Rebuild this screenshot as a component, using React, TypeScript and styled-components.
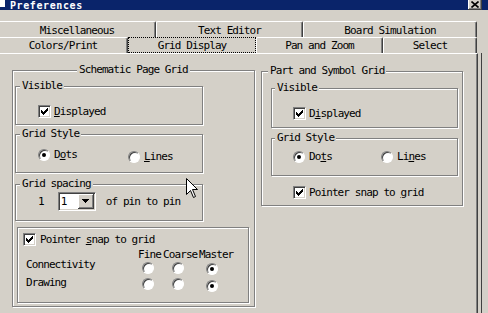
import styled, { createGlobalStyle, css } from "styled-components";

const face = "#d4d0c8";
const shadow = "#808080";
const dark = "#404040";

const GlobalStyle = createGlobalStyle`
  html, body {
    margin: 0;
    padding: 0;
    background: ${face};
  }
  body {
    font-family: "DejaVu Sans Mono", "Liberation Mono", monospace;
    font-size: 11px;
    letter-spacing: -0.9px;
    color: #000;
  }
`;

const tabsBack = [
  { label: "Miscellaneous", width: 158 },
  { label: "Text Editor", width: 147 },
  { label: "Board Simulation", width: 174 },
];

const tabsFront = [
  { label: "Colors/Print", width: 130 },
  { label: "Grid Display", width: 128, active: true },
  { label: "Pan and Zoom", width: 127 },
  { label: "Select", width: 94 },
];

const Check = () => (
  <CheckBox>
    <svg width="7" height="7" viewBox="0 0 7 7" shapeRendering="crispEdges">
      {[2, 3, 4, 3, 2, 1, 0].map((y, x) => (
        <rect key={x} x={x} y={y} width="1" height="3" fill="#000" />
      ))}
    </svg>
  </CheckBox>
);

const App = () => {
  return (
    <>
      <GlobalStyle />
      <Window>
        <TitleBar>
          <TitleIcon />
          <TitleText>Preferences</TitleText>
          <CloseButton>
            <svg width="8" height="7" viewBox="0 0 8 7">
              <path d="M0.5 0.5 L7.5 6.5 M7.5 0.5 L0.5 6.5" stroke="#000" strokeWidth="1.6" />
            </svg>
          </CloseButton>
        </TitleBar>

        <TabRow $mt={11}>
          {tabsBack.map((t) => (
            <Tab key={t.label} $w={t.width} $pt={3}>
              {t.label}
            </Tab>
          ))}
        </TabRow>
        <TabRow $mt={0}>
          {tabsFront.map((t) => (
            <Tab key={t.label} $w={t.width} $pt={2} $active={t.active}>
              {t.label}
            </Tab>
          ))}
        </TabRow>

        <PanelFrame>
          <Panel>
            {/* Schematic Page Grid */}
            <Group $w={243} $h={237} $mt={16}>
              <GroupTitle $ml={64}>Schematic Page Grid</GroupTitle>

              <Group $w={188} $h={39} $mt={10} $ml={2}>
                <GroupTitle $ml={4}>Visible</GroupTitle>
                <CheckRow $mt={13} $ml={22}>
                  <Check />
                  <span>
                    <Key>D</Key>isplayed
                  </span>
                </CheckRow>
              </Group>

              <Group $w={188} $h={39} $mt={9} $ml={2}>
                <GroupTitle $ml={4}>Grid Style</GroupTitle>
                <OptionRow $mt={9} $ml={22}>
                  <Option $w={90}>
                    <Radio $on />
                    <span>
                      D<Key>o</Key>ts
                    </span>
                  </Option>
                  <Option $dy={2}>
                    <Radio />
                    <span>
                      <Key>L</Key>ines
                    </span>
                  </Option>
                </OptionRow>
              </Group>

              <Group $w={188} $h={37} $mt={11} $ml={2}>
                <GroupTitle $ml={4}>Grid spacing</GroupTitle>
                <SpacingRow>
                  <span>1</span>
                  <Combo>
                    <ComboValue>1</ComboValue>
                    <ComboButton>
                      <svg width="7" height="4" viewBox="0 0 7 4" shapeRendering="crispEdges">
                        <path d="M0 0 H7 L3.5 4 Z" fill="#000" />
                      </svg>
                    </ComboButton>
                  </Combo>
                  <SpacingText>of pin to pin</SpacingText>
                </SpacingRow>
              </Group>

              <Group $w={232} $h={76} $mt={6} $ml={4}>
                <CheckRow $mt={5} $ml={5} $gap={4}>
                  <Check />
                  <span>
                    Pointer <Key>s</Key>nap to grid
                  </span>
                </CheckRow>
                <Matrix>
                  <span />
                  <HeadCell>Fine</HeadCell>
                  <HeadCell>Coarse</HeadCell>
                  <HeadCell>Master</HeadCell>

                  <span>Connectivity</span>
                  <RadioCell $x={4} $dy={3}>
                    <Radio />
                  </RadioCell>
                  <RadioCell $x={9} $dy={3}>
                    <Radio />
                  </RadioCell>
                  <RadioCell $x={7} $dy={4}>
                    <Radio $on />
                  </RadioCell>

                  <span>Drawing</span>
                  <RadioCell $x={4} $dy={1}>
                    <Radio />
                  </RadioCell>
                  <RadioCell $x={9} $dy={1}>
                    <Radio />
                  </RadioCell>
                  <RadioCell $x={7} $dy={3}>
                    <Radio $on />
                  </RadioCell>
                </Matrix>
              </Group>
            </Group>

            {/* Part and Symbol Grid */}
            <Group $w={202} $h={135} $mt={17} $ml={6}>
              <GroupTitle $ml={6}>Part and Symbol Grid</GroupTitle>

              <Group $w={187} $h={40} $mt={11} $ml={9}>
                <GroupTitle $ml={3}>Visible</GroupTitle>
                <CheckRow $mt={13} $ml={21}>
                  <Check />
                  <span>
                    D<Key>i</Key>splayed
                  </span>
                </CheckRow>
              </Group>

              <Group $w={187} $h={38} $mt={10} $ml={9}>
                <GroupTitle $ml={3}>Grid Style</GroupTitle>
                <OptionRow $mt={7} $ml={21}>
                  <Option $w={88}>
                    <Radio $on />
                    <span>
                      Do<Key>t</Key>s
                    </span>
                  </Option>
                  <Option>
                    <Radio />
                    <span>
                      Li<Key>n</Key>es
                    </span>
                  </Option>
                </OptionRow>
              </Group>

              <CheckRow $mt={10} $ml={31}>
                <Check />
                <span>
                  Pointer snap to <Key>g</Key>rid
                </span>
              </CheckRow>
            </Group>
          </Panel>
        </PanelFrame>

        <Cursor width="12" height="20" viewBox="0 0 12 20">
          <path
            d="M0.5 0.5 V16.5 L4.5 12.5 L7.5 19.5 L9.5 18.5 L6.5 11.5 H11.5 Z"
            fill="#fff"
            stroke="#000"
          />
        </Cursor>
      </Window>
    </>
  );
};

export default App;

const Window = styled.div`
  position: relative;
  width: 488px;
  height: 313px;
  overflow: hidden;
  background: ${face};
  display: flex;
  flex-direction: column;
`;

const TitleBar = styled.div`
  flex: none;
  height: 10px;
  display: flex;
  align-items: flex-start;
  background: #0a246a;
`;

const TitleIcon = styled.div`
  flex: none;
  width: 5px;
  height: 7px;
  background: #fff;
`;

const TitleText = styled.div`
  margin-left: 5px;
  color: #fff;
  font-size: 10px;
  font-weight: bold;
  letter-spacing: 0.6px;
  line-height: 11px;
  white-space: nowrap;
`;

const CloseButton = styled.div`
  margin-left: auto;
  margin-right: 6px;
  box-sizing: border-box;
  width: 14px;
  height: 10px;
  padding-top: 1px;
  background: ${face};
  border-right: 1px solid ${dark};
  border-bottom: 1px solid ${dark};
  box-shadow: inset 1px 0 #fff, inset -1px -1px ${shadow};
  display: flex;
  justify-content: center;
  align-items: flex-start;
`;

const TabRow = styled.div<{ $mt: number }>`
  flex: none;
  display: flex;
  height: 16px;
  margin: ${(p) => p.$mt}px 0 0 -2px;
`;

const Tab = styled.div<{ $w: number; $pt: number; $active?: boolean }>`
  box-sizing: border-box;
  flex: none;
  width: ${(p) => p.$w}px;
  height: 16px;
  padding-top: ${(p) => p.$pt}px;
  line-height: 12px;
  text-align: center;
  white-space: nowrap;
  border-top: 1px solid #fff;
  border-left: 1px solid #fff;
  border-right: 1px solid ${dark};
  border-radius: 2px 2px 0 0;
  box-shadow: inset -1px 0 ${shadow};

  ${(p) =>
    p.$active &&
    css`
      border-color: transparent;
      border-radius: 0;
      box-shadow: none;
      outline: 1px dotted #000;
      outline-offset: -1px;
    `}
`;

const PanelFrame = styled.div`
  flex: 1;
  display: flex;
  box-sizing: border-box;
  width: 482px;
  border-right: 1px solid ${dark};
`;

const Panel = styled.div`
  box-sizing: border-box;
  width: 478px;
  padding-left: 12px;
  border-top: 1px solid #fff;
  border-right: 1px solid ${dark};
  box-shadow: inset -1px 0 ${shadow};
  display: flex;
  align-items: flex-start;
`;

const Group = styled.div<{ $w: number; $h: number; $mt: number; $ml?: number }>`
  box-sizing: border-box;
  flex: none;
  width: ${(p) => p.$w}px;
  height: ${(p) => p.$h}px;
  margin: ${(p) => p.$mt}px 0 0 ${(p) => p.$ml ?? 0}px;
  border: 1px solid ${shadow};
  box-shadow: inset 1px 1px #fff, 1px 1px #fff;
  display: flex;
  flex-direction: column;
  align-items: flex-start;
`;

const GroupTitle = styled.div<{ $ml: number }>`
  margin: -7px 0 0 ${(p) => p.$ml}px;
  padding: 0 2px;
  background: ${face};
  line-height: 12px;
  white-space: nowrap;
`;

const Key = styled.span`
  text-decoration: underline;
  text-underline-offset: 1px;
`;

const CheckRow = styled.label<{ $mt: number; $ml: number; $gap?: number }>`
  display: flex;
  align-items: center;
  gap: ${(p) => p.$gap ?? 3}px;
  height: 13px;
  margin: ${(p) => p.$mt}px 0 0 ${(p) => p.$ml}px;
  line-height: 12px;
  white-space: nowrap;
`;

const CheckBox = styled.span`
  box-sizing: border-box;
  flex: none;
  width: 13px;
  height: 13px;
  background: #fff;
  border: 1px solid;
  border-color: ${shadow} #fff #fff ${shadow};
  box-shadow: inset 1px 1px ${dark}, inset -1px -1px ${face};
  display: flex;
  align-items: center;
  justify-content: center;
`;

const OptionRow = styled.div<{ $mt: number; $ml: number }>`
  display: flex;
  align-items: flex-start;
  margin: ${(p) => p.$mt}px 0 0 ${(p) => p.$ml}px;
`;

const Option = styled.label<{ $w?: number; $dy?: number }>`
  display: flex;
  align-items: center;
  gap: 4px;
  width: ${(p) => (p.$w ? `${p.$w}px` : "auto")};
  height: 12px;
  margin-top: ${(p) => p.$dy ?? 0}px;
  line-height: 12px;
  white-space: nowrap;
`;

const Radio = styled.span<{ $on?: boolean }>`
  box-sizing: border-box;
  flex: none;
  width: 12px;
  height: 12px;
  border-radius: 50%;
  background: #fff;
  border: 1px solid;
  border-color: ${shadow} #fff #fff ${shadow};
  box-shadow: inset 1px 1px ${dark};
  display: flex;
  align-items: center;
  justify-content: center;

  &::after {
    content: "";
    display: ${(p) => (p.$on ? "block" : "none")};
    width: 4px;
    height: 4px;
    border-radius: 50%;
    background: #000;
  }
`;

const SpacingRow = styled.div`
  display: flex;
  align-items: center;
  height: 19px;
  margin: 2px 0 0 22px;
  line-height: 12px;
  white-space: nowrap;
`;

const Combo = styled.div`
  box-sizing: border-box;
  display: flex;
  align-items: center;
  width: 38px;
  height: 19px;
  margin-left: 14px;
  background: #fff;
  border: 1px solid;
  border-color: ${shadow} #fff #fff ${shadow};
  box-shadow: inset 1px 1px ${dark}, inset -1px -1px ${face};
`;

const ComboValue = styled.span`
  flex: 1;
  padding-left: 2px;
  line-height: 12px;
`;

const ComboButton = styled.span`
  box-sizing: border-box;
  width: 16px;
  height: 15px;
  margin-right: 1px;
  background: ${face};
  border-right: 1px solid ${dark};
  border-bottom: 1px solid ${dark};
  box-shadow: inset 1px 1px #fff, inset -1px -1px ${shadow};
  display: flex;
  align-items: center;
  justify-content: center;
`;

const SpacingText = styled.span`
  margin-left: 10px;
`;

const Matrix = styled.div`
  display: grid;
  grid-template-columns: 112px 25px 36px 35px;
  grid-template-rows: 10px 18px 12px;
  margin: 3px 0 0 8px;
  line-height: 12px;
  white-space: nowrap;
`;

const HeadCell = styled.span`
  align-self: start;
  height: 12px;
`;

const RadioCell = styled.span<{ $x: number; $dy: number }>`
  display: flex;
  padding: ${(p) => p.$dy}px 0 0 ${(p) => p.$x}px;
`;

const Cursor = styled.svg`
  position: absolute;
  left: 186px;
  top: 178px;
`;
